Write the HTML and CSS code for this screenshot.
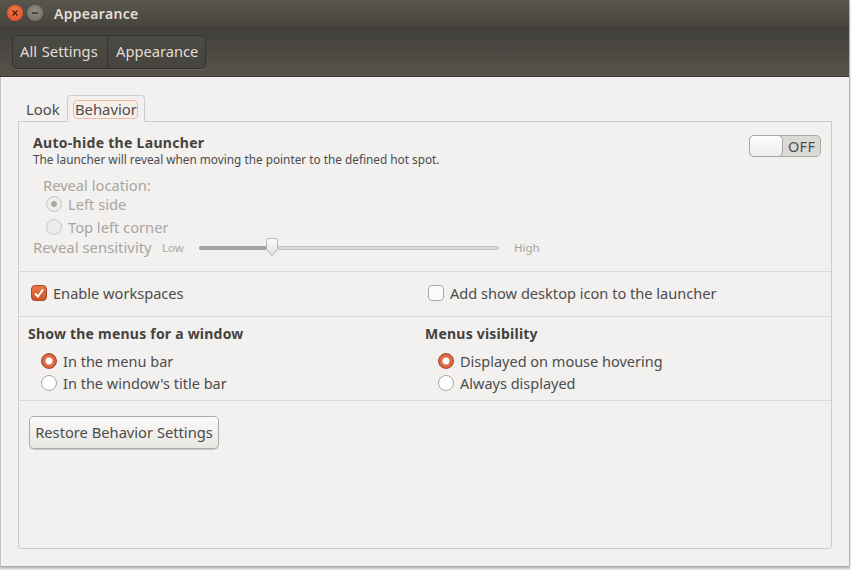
FILE: index.html
```html
<!DOCTYPE html>
<html lang="en">
<head>
<meta charset="utf-8">
<title>Appearance</title>
<link rel="stylesheet" href="styles.css">
</head>
<body>
<div class="window">
  <header class="titlebar">
    <button class="wbtn close" aria-label="Close"><svg width="8" height="8" viewBox="0 0 8 8"><path d="M1.5 1.5l5 5M6.500 1.500l-5 5" stroke="#4a1a08" stroke-width="1.300" fill="none"/></svg></button>
    <button class="wbtn min" aria-label="Minimize"><svg width="8" height="8" viewBox="0 0 8 8"><path d="M1 4h6" stroke="#35332e" stroke-width="1.500" fill="none"/></svg></button>
    <span class="wtitle">Appearance</span>
  </header>
  <nav class="toolbar">
    <div class="crumbs">
      <span class="crumb first">All Settings</span>
      <span class="crumb">Appearance</span>
    </div>
  </nav>
  <main class="content">
    <div class="tabs">
      <span class="tab">Look</span>
      <span class="tab active"><span class="focus">Behavior</span></span>
    </div>
    <div class="frame">
      <section class="sec autohide">
        <div class="ah-head">
          <div>
            <div class="bold">Auto-hide the Launcher</div>
            <div class="small">The launcher will reveal when moving the pointer to the defined hot spot.</div>
          </div>
          <div class="switch"><span class="knob"></span><span class="off">OFF</span></div>
        </div>
        <div class="reveal dim">
          <div class="rl">Reveal location:</div>
          <div class="opt o1"><span class="radio disabled on"></span>Left side</div>
          <div class="opt o2"><span class="radio disabled"></span>Top left corner</div>
        </div>
        <div class="sens dim">
          <span class="sens-label">Reveal sensitivity</span>
          <span class="tick low">Low</span>
          <div class="slider"><span class="fill"></span><svg class="thumb" width="12" height="18" viewBox="0 0 12 18"><defs><linearGradient id="tg" x1="0" y1="0" x2="0" y2="1"><stop offset="0" stop-color="#fbfafa"/><stop offset="1" stop-color="#e3e1de"/></linearGradient></defs><path d="M2.500.5h7a2 2 0 0 1 2 2v9L6 17.500.5 11.500v-9a2 2 0 0 1 2-2z" fill="url(#tg)" stroke="#b5b3af"/></svg></div>
          <span class="tick high">High</span>
        </div>
      </section>
      <section class="sec two work">
        <div class="col check-row"><span class="check on"><svg width="12" height="12" viewBox="0 0 12 12"><path d="M2 6.500l3 3 5-7" stroke="#fff" stroke-width="2" fill="none"/></svg></span>Enable workspaces</div>
        <div class="col check-row"><span class="check"></span>Add show desktop icon to the launcher</div>
      </section>
      <section class="sec two menus">
        <div class="col">
          <div class="bold mhead">Show the menus for a window</div>
          <div class="mopt"><span class="radio on"></span>In the menu bar</div>
          <div class="mopt"><span class="radio"></span>In the window's title bar</div>
        </div>
        <div class="col">
          <div class="bold mhead">Menus visibility</div>
          <div class="mopt"><span class="radio on"></span>Displayed on mouse hovering</div>
          <div class="mopt"><span class="radio"></span>Always displayed</div>
        </div>
      </section>
      <section class="restore">
        <button class="btn">Restore Behavior Settings</button>
      </section>
    </div>
  </main>
</div>
</body>
</html>
```
FILE: styles.css
```css
* { box-sizing: border-box; }
html, body { margin: 0; height: 571px; overflow: hidden; background: #fff; }
body { font-family: "Noto Sans", "Open Sans", sans-serif; font-size: 14.600px; color: #4c4c4c; }
.window { width: 850px; height: 567px; background: #f2f1ef; border-right: 1px solid #b5b3ae; border-bottom: 1px solid #aaa; box-shadow: 0 2px 2px #bbb; display: flex; flex-direction: column; }
.titlebar { height: 27px; background: linear-gradient(#5a564e, #46443d); display: flex; align-items: center; padding-left: 7px; gap: 4px; }
.wbtn { width: 16px; height: 16px; border-radius: 50%; border: 0; padding: 0; display: flex; align-items: center; justify-content: center; margin-top: -1px; }
.close { background: radial-gradient(circle at 50% 40%, #f5794a, #d8471e); }
.min { background: radial-gradient(circle at 50% 40%, #8f8c85, #6e6b64); }
.wtitle { font-weight: 600; font-size: 14px; letter-spacing: .3px; color: #e3dfd6; margin-left: 7px; margin-top: -1px; }
.toolbar { height: 50px; background: linear-gradient(#403f39, #56534b); display: flex; align-items: flex-start; padding: 8px 0 0 12px; border-bottom: 1px solid #3b3a35; }
.crumbs { display: flex; height: 34px; border: 1px solid #35342f; border-radius: 5px; background: linear-gradient(#4b4a43, #45443e); color: #e0ddd6; box-shadow: 0 1px 0 #625f57; }
.crumb { display: flex; align-items: center; padding: 0 7px 2px 8px; font-size: 14.700px; }
.crumb.first { border-right: 1px solid #35342f; width: 95px; padding-left: 7px; word-spacing: 1px; white-space: nowrap; }
.content { flex: 1; display: flex; flex-direction: column; padding: 18px 17px 17px 17px; border-left: 1px solid #c6c4c0; min-height: 0; }
.tabs { display: flex; height: 27px; margin-bottom: -1px; }
.tab { display: flex; align-items: center; height: 27px; font-size: 14.800px; }
.tab:first-child { width: 49px; padding: 1px 0 0 8px; border-bottom: 1px solid #cfcdc9; }
.tab.active { width: 78px; background: #f2f1ef; border: 1px solid #cfcdc9; border-bottom: 0; border-radius: 4px 4px 0 0; padding: 0 0 1px 5px; position: relative; z-index: 1; }
.focus { display: block; width: 65px; height: 19px; line-height: 16px; padding-left: 1px; border: 1px solid #f4b9a3; border-radius: 4px; margin-top: 2px; white-space: nowrap; background: #f7efea; }
.frame { flex: 1; border: 1px solid #cfcdc9; border-radius: 0 0 3px 3px; display: flex; flex-direction: column; }
.sec { border-bottom: 1px solid #dddbd8; }
.bold { font-weight: 700; font-size: 14px; letter-spacing: .3px; color: #45423e; }
.small { font-size: 11.800px; line-height: 15px; color: #4c4c4c; }
.autohide { height: 150px; padding: 12px 10px 0 14px; }
.ah-head { display: flex; justify-content: space-between; align-items: flex-start; height: 44px; }
.ah-head .bold { line-height: 18px; }
.switch { width: 72px; height: 22px; margin-top: 1px; border: 1px solid #a9a7a3; border-radius: 5px; background: #dcdad7; display: flex; align-items: center; }
.knob { width: 34px; height: 22px; margin: 0 0 0 -1px; border: 1px solid #a9a7a3; border-radius: 5px; background: linear-gradient(#fdfdfc, #eeedeb); }
.off { margin-left: 5px; font-size: 14.500px; letter-spacing: .3px; color: #4c4c4c; }
.dim { color: #a8a5a0; }
.reveal { padding-left: 10px; height: 60px; }
.rl { height: 19px; line-height: 19px; font-size: 14.700px; margin-top: -2px; }
.opt { display: flex; align-items: center; height: 22px; font-size: 14.700px; padding-left: 3px; }
.o1 { height: 18px; margin-bottom: 3px; }
.radio { width: 16px; height: 16px; border-radius: 50%; border: 1px solid #a8a7a4; background: #fff; margin-right: 6px; flex: none; position: relative; }
.radio.on { background: radial-gradient(circle, #fff 0 3px, #e0714a 4px, #c9552c 100%); border-color: #a9492a; }
.radio.disabled { background: #eeedeb; border-color: #c9c7c3; }
.radio.disabled.on { background: radial-gradient(circle, #a9a7a3 0 2.500px, #eeedeb 3.200px); }
.sens { display: flex; align-items: center; height: 22px; }
.sens-label { width: 129px; font-size: 14.900px; white-space: nowrap; }
.tick { font-size: 11.500px; }
.low { width: 37px; }
.slider { width: 300px; height: 4px; margin-top: 2px; border-radius: 2px; background: #dcdad7; border: 1px solid #c5c3bf; position: relative; }
.fill { display: block; width: 68px; height: 4px; margin: -1px; background: #a5a39f; border-radius: 2px; }
.thumb { position: absolute; left: 66px; top: -9px; }
.high { margin-left: 15px; }
.two { display: flex; }
.work { height: 45px; align-items: center; padding: 0 0 3px 12px; }
.work .col { width: 397px; }
.check-row { display: flex; align-items: center; font-size: 14.600px; }
.check { width: 16px; height: 16px; border-radius: 4px; border: 1px solid #aaa8a4; background: #fbfafa; margin-right: 6px; display: flex; align-items: center; justify-content: center; flex: none; }
.check.on { background: linear-gradient(#e8774a, #c9552c); border-color: #a9492a; }
.menus { height: 84px; padding: 7px 0 0 9px; }
.menus .col { width: 397px; }
.mhead { height: 20px; line-height: 20px; margin-bottom: 6px; letter-spacing: .22px; }
.mopt { display: flex; align-items: center; height: 22px; font-size: 14.500px; padding-left: 13px; }
.restore { padding: 15px 0 0 10px; }
.btn { width: 190px; height: 33px; border: 1px solid #adaba7; border-radius: 5px; background: linear-gradient(#fbfaf9, #e8e7e4); box-shadow: 0 1px 0 #c8c6c2; font: inherit; font-size: 14.700px; color: #4c4c4c; padding: 0 0 2px; white-space: nowrap; }
```
